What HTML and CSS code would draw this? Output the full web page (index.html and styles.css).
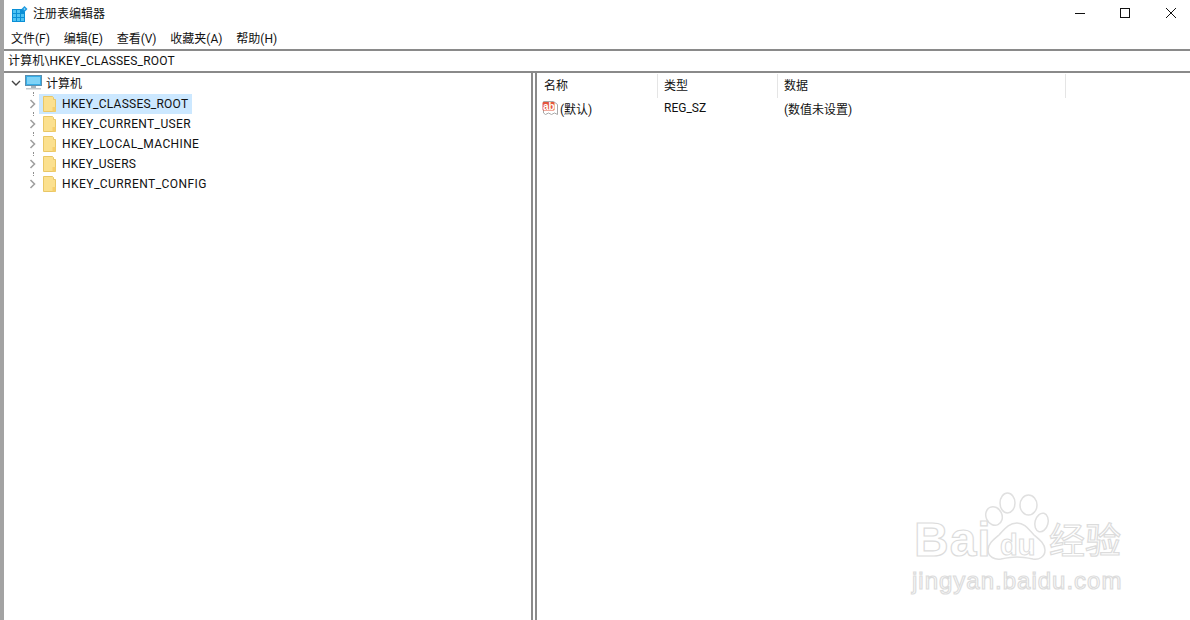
FILE: index.html
```html
<!DOCTYPE html>
<html lang="zh-CN">
<head>
<meta charset="utf-8">
<title>注册表编辑器</title>
<link rel="stylesheet" href="styles.css">
</head>
<body>
<div class="window">
  <header class="titlebar">
    <svg class="app-icon" width="16" height="16" viewBox="0 0 16 16">
      <rect x="0" y="3" width="13" height="13" fill="#0a8fd6"/>
      <g fill="#4fc3f2">
        <rect x="1" y="4" width="3" height="3"/><rect x="5" y="4" width="3" height="3"/>
        <rect x="1" y="8" width="3" height="3"/><rect x="5" y="8" width="3" height="3"/><rect x="9" y="8" width="3" height="3"/>
        <rect x="1" y="12" width="3" height="3"/><rect x="5" y="12" width="3" height="3"/><rect x="9" y="12" width="3" height="3"/>
      </g>
      <path d="M12.5 0l3 3-3 3-3-3z" fill="#1f9be0"/>
      <path d="M12.5 2l1 1-1 1-1-1z" fill="#a6e0fa"/>
    </svg>
    <span class="title">注册表编辑器</span>
    <div class="controls">
      <svg width="12" height="12" viewBox="0 0 12 12"><path d="M0 6.500h10" stroke="#111" fill="none"/></svg>
      <svg width="12" height="12" viewBox="0 0 12 12"><rect x="0.500" y="1.500" width="9" height="9" stroke="#111" fill="none"/></svg>
      <svg width="12" height="12" viewBox="0 0 12 12"><path d="M1 1l10 10M11 1L1 11" stroke="#111" fill="none"/></svg>
    </div>
  </header>
  <nav class="menubar">
    <span>文件(F)</span><span>编辑(E)</span><span>查看(V)</span><span>收藏夹(A)</span><span>帮助(H)</span>
  </nav>
  <div class="address">计算机\HKEY_CLASSES_ROOT</div>
  <main class="panes">
    <section class="tree">
      <div class="root-row">
        <svg class="chev" width="10" height="10" viewBox="0 0 10 10"><path d="M1 3l4 4 4-4" stroke="#444" stroke-width="1.4" fill="none"/></svg>
        <svg class="pc" width="17" height="15" viewBox="0 0 17 15">
          <rect x="0.5" y="0.5" width="16" height="10" fill="#35aee8" stroke="#5b8fb0"/>
          <rect x="2" y="2" width="13" height="7" fill="#7fd3f7"/>
          <rect x="6" y="11" width="5" height="2" fill="#a9b4bb"/>
          <rect x="1" y="13" width="15" height="1.5" fill="#c3c9cd"/>
        </svg>
        <span>计算机</span>
      </div>
      <div class="key">
        <svg class="chev" width="8" height="10" viewBox="0 0 8 10"><path d="M2.500 1l4 4-4 4" stroke="#a0a0a0" stroke-width="1.600" fill="none"/></svg>
        <div class="key-label selected">
          <svg class="folder" width="13" height="16" viewBox="0 0 13 16"><path d="M.5.5h9l1 1v2h2v12H.5z" fill="#fbe08e" stroke="#e9c766"/><path d="M9.5 11h3v4.500h-3z" fill="#f6cf6c"/></svg>
          <span>HKEY_CLASSES_ROOT</span>
        </div>
      </div>
      <div class="key">
        <svg class="chev" width="8" height="10" viewBox="0 0 8 10"><path d="M2.500 1l4 4-4 4" stroke="#a0a0a0" stroke-width="1.600" fill="none"/></svg>
        <div class="key-label wide">
          <svg class="folder" width="13" height="16" viewBox="0 0 13 16"><path d="M.5.5h9l1 1v2h2v12H.5z" fill="#fbe08e" stroke="#e9c766"/><path d="M9.5 11h3v4.500h-3z" fill="#f6cf6c"/></svg>
          <span>HKEY_CURRENT_USER</span>
        </div>
      </div>
      <div class="key">
        <svg class="chev" width="8" height="10" viewBox="0 0 8 10"><path d="M2.500 1l4 4-4 4" stroke="#a0a0a0" stroke-width="1.600" fill="none"/></svg>
        <div class="key-label wide">
          <svg class="folder" width="13" height="16" viewBox="0 0 13 16"><path d="M.5.5h9l1 1v2h2v12H.5z" fill="#fbe08e" stroke="#e9c766"/><path d="M9.5 11h3v4.500h-3z" fill="#f6cf6c"/></svg>
          <span>HKEY_LOCAL_MACHINE</span>
        </div>
      </div>
      <div class="key">
        <svg class="chev" width="8" height="10" viewBox="0 0 8 10"><path d="M2.500 1l4 4-4 4" stroke="#a0a0a0" stroke-width="1.600" fill="none"/></svg>
        <div class="key-label">
          <svg class="folder" width="13" height="16" viewBox="0 0 13 16"><path d="M.5.5h9l1 1v2h2v12H.5z" fill="#fbe08e" stroke="#e9c766"/><path d="M9.5 11h3v4.500h-3z" fill="#f6cf6c"/></svg>
          <span>HKEY_USERS</span>
        </div>
      </div>
      <div class="key">
        <svg class="chev" width="8" height="10" viewBox="0 0 8 10"><path d="M2.500 1l4 4-4 4" stroke="#a0a0a0" stroke-width="1.600" fill="none"/></svg>
        <div class="key-label wider">
          <svg class="folder" width="13" height="16" viewBox="0 0 13 16"><path d="M.5.5h9l1 1v2h2v12H.5z" fill="#fbe08e" stroke="#e9c766"/><path d="M9.5 11h3v4.500h-3z" fill="#f6cf6c"/></svg>
          <span>HKEY_CURRENT_CONFIG</span>
        </div>
      </div>
    </section>
    <section class="list">
      <div class="list-head">
        <span class="col col-name">名称</span>
        <span class="col col-type">类型</span>
        <span class="col col-data">数据</span>
      </div>
      <div class="list-row">
        <span class="cell col-name-cell">
          <svg class="ab" width="17" height="16" viewBox="0 0 17 16">
            <path d="M1.500 1.500h10l4 3v10l-3-1.500-3 1.500-3-1.500-3 1.500-2-1.500z" fill="#fff" stroke="#a8a8a8"/>
            <rect x="0.500" y="2" width="12" height="8.500" rx="1" fill="#e4553c"/>
            <text x="1" y="9.500" class="ab-text">ab</text>
          </svg>
          <span>(默认)</span>
        </span>
        <span class="cell col-type-cell">REG_SZ</span>
        <span class="cell">(数值未设置)</span>
      </div>
    </section>
  </main>
  <div class="watermark">
    <svg class="paw" width="72" height="76" viewBox="0 0 72 76">
      <g fill="#fff" stroke="#e0e0e0" stroke-width="1.500">
        <ellipse cx="14" cy="28" rx="8" ry="9.500" transform="rotate(-25 14 28)"/>
        <ellipse cx="27.500" cy="15" rx="7.500" ry="10"/>
        <ellipse cx="48.500" cy="17" rx="8.500" ry="10"/>
        <ellipse cx="61.500" cy="34.500" rx="6.500" ry="9.500" transform="rotate(15 61.500 34.500)"/>
        <path d="M37 35c8 0 12 7 17 12 6 5 11 9 11 15 0 7-6 10-12 9-5-1-10-2-16-2s-11 1-16 2c-6 1-13-2-13-9 0-6 5-10 11-15 5-5 9-12 18-12z"/>
      </g>
    </svg>
    <span class="wm-bai">Bai</span>
    <span class="wm-du">du</span>
    <span class="wm-cn">经验</span>
    <span class="wm-url">jingyan.baidu.com</span>
  </div>
</div>
</body>
</html>
```
FILE: styles.css
```css
* { box-sizing: border-box; }
html, body { margin: 0; height: 100%; overflow: hidden; }
body {
  background: #fff;
  font-family: Roboto, "Noto Sans CJK SC", sans-serif;
  font-size: 12px;
  color: #111;
}
.window {
  position: relative;
  width: 1190px;
  height: 620px;
  border-left: 4px solid #a3a3a3;
  display: flex;
  flex-direction: column;
  overflow: hidden;
}
.titlebar {
  height: 26px;
  display: flex;
  align-items: center;
  padding-left: 8px;
  flex: none;
}
.app-icon { flex: none; margin-top: 1px; }
.title { margin-left: 5px; margin-bottom: 2px; font-size: 12px; }
.controls {
  margin-left: auto;
  display: flex;
  gap: 33px;
  padding-right: 13px;
}
.menubar {
  height: 23px;
  display: flex;
  align-items: center;
  padding-left: 7px;
  gap: 13.8px;
  flex: none;
}
.address {
  height: 24px;
  flex: none;
  border-top: 2px solid #8a8a8a;
  border-bottom: 2px solid #8a8a8a;
  padding-left: 4px;
  line-height: 20px;
  font-size: 12px;
  letter-spacing: 0.17px;
}
.panes { flex: 1; display: flex; min-height: 0; }
.tree {
  width: 529px;
  flex: none;
  border-right: 2px solid #8a8a8a;
}
.root-row {
  height: 21px;
  padding-bottom: 2px;
  display: flex;
  align-items: center;
  padding-left: 7px;
}
.root-row .pc { margin-left: 4px; margin-right: 4px; }
.key {
  position: relative;
  height: 20px;
  display: flex;
  align-items: center;
  padding-left: 24px;
}
.key::before {
  content: "";
  position: absolute;
  left: 29px;
  top: -2px;
  height: 4px;
  border-left: 1px dotted #8f8f8f;
}
.key .chev { flex: none; margin-right: 3px; }
.key-label {
  height: 20px;
  display: flex;
  align-items: center;
  padding: 0 4px;
  letter-spacing: 0.24px;
}
.key-label.wide { letter-spacing: 0.36px; }
.key-label.wider { letter-spacing: 0.45px; }
.key-label.selected { background: #cce8ff; }
.folder { margin-right: 6px; flex: none; }
.list {
  flex: 1;
  border-left: 2px solid #8a8a8a;
  margin-left: 2px;
}
.list-head {
  height: 24px;
  display: flex;
  align-items: center;
  padding-top: 1px;
}
.col {
  height: 24px;
  line-height: 25px;
  padding-left: 7px;
  border-right: 1px solid #e5e5e5;
}
.col-name { width: 121px; }
.col-type { width: 120px; padding-left: 6px; }
.col-data { width: 288px; padding-left: 6px; }
.list-row {
  height: 22px;
  display: flex;
  align-items: center;
}
.cell { display: flex; align-items: center; }
.col-name-cell { width: 127px; padding-left: 5px; gap: 1px; }
.col-type-cell { width: 120px; }
.ab-text {
  font-family: "Liberation Sans", sans-serif;
  font-size: 10px;
  font-weight: 700;
  fill: #fff;
}
.watermark {
  position: absolute;
  left: 906px;
  top: 488px;
  width: 225px;
  height: 110px;
}
.paw { position: absolute; left: 70px; top: 0; }
.wm-bai, .wm-du, .wm-cn, .wm-url {
  position: absolute;
  color: #fff;
  -webkit-text-stroke: 1.2px #dcdcdc;
  font-family: "Liberation Sans", "Noto Sans CJK SC", sans-serif;
  white-space: nowrap;
}
.wm-bai { left: 4px; top: 27px; font-size: 48px; line-height: 50px; font-weight: 700; letter-spacing: 1px; }
.wm-du { left: 90px; top: 42px; font-size: 29px; line-height: 30px; font-weight: 700; -webkit-text-stroke-width: 1px; }
.wm-cn { left: 139px; top: 34px; font-size: 36px; line-height: 40px; }
.wm-url { left: 2px; top: 79px; font-size: 24px; line-height: 28px; letter-spacing: 1px; }
```
